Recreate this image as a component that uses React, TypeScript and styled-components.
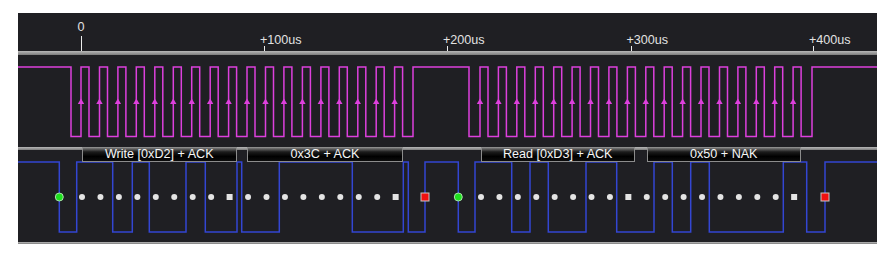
import React from "react";
import styled, { createGlobalStyle } from "styled-components";

const GlobalStyle = createGlobalStyle`
  html, body { margin: 0; padding: 0; background: #ffffff; }
  body { font-family: "Liberation Sans", Arial, sans-serif; }
`;

const OX = 18; // panel left in page coords
const W = 859;

const Scope = styled.div`
  padding: 13px 0 0 ${OX}px;
`;

const Panel = styled.div`
  width: ${W}px;
  background: #1f1f23;
  display: flex;
  flex-direction: column;
`;

const Ruler = styled.div`
  position: relative;
  height: 38px;
`;

const Tick = styled.div`
  position: absolute;
  top: 0;
  bottom: 0;
  width: 0;
`;

const TickLabel = styled.span<{ $major?: boolean }>`
  position: absolute;
  top: ${(p) => (p.$major ? 7 : 20)}px;
  left: ${(p) => (p.$major ? "0" : "-4px")};
  transform: ${(p) => (p.$major ? "translateX(-50%)" : "none")};
  font-size: 12.6px;
  line-height: 14px;
  color: #e2e2e2;
  white-space: nowrap;
`;

const TickLine = styled.div<{ $major?: boolean }>`
  position: absolute;
  left: 0;
  bottom: 0;
  width: 1px;
  height: ${(p) => (p.$major ? 15 : 5)}px;
  background: #ececec;
`;

const Bar = styled.div<{ $h: number }>`
  height: ${(p) => p.$h}px;
  background: linear-gradient(to bottom, #b8b8b8, #7c7c7c);
`;

const Channel = styled.div`
  position: relative;
  height: 92px;
  svg { display: block; }
`;

const DecodeBox = styled.div`
  position: absolute;
  top: -3px;
  height: 15px;
  box-sizing: border-box;
  border: 1px solid #8c8c8c;
  background: linear-gradient(to bottom, #777 0%, #1c1c1c 30%, #000 65%, #0c0c0c 100%);
  color: #f6f6f6;
  font-size: 12.6px;
  line-height: 13px;
  text-align: center;
  white-space: nowrap;
  overflow: hidden;
`;

const CLK = "#dd40dd";
const SDA = "#3346d2";

const STEP_W = 18.45;
const STEP_R = 18.42;
const writeRises = Array.from({ length: 18 }, (_, i) => 81 + i * STEP_W);
const readRises = Array.from({ length: 18 }, (_, i) => 480 + i * STEP_R);

function clockPath() {
  const hi = 67;
  const lo = 136.5;
  let d = `M18,${hi} H71 V${lo}`;
  for (const r of writeRises) d += ` H${r.toFixed(1)} V${hi} H${(r + 8).toFixed(1)} V${lo}`;
  d += ` H413 V${hi} H469 V${lo}`;
  for (const r of readRises) d += ` H${r.toFixed(1)} V${hi} H${(r + 8).toFixed(1)} V${lo}`;
  d += ` H812 V${hi} H877`;
  return d;
}

const sdaEdges = [
  59.3, 76.7, 112.7, 132.3, 149.3, 186, 205.3, 237, 241.7, 279.3, 352.3, 403.3,
  408.3, 425, 458.3, 475, 511.7, 530, 548.3, 586, 616.7, 654, 672.3, 690.7,
  709.3, 783.3, 806.7, 825,
];

function dataPath() {
  const hi = 162;
  const lo = 232;
  let d = `M18,${hi}`;
  let level = hi;
  for (const x of sdaEdges) {
    level = level === hi ? lo : hi;
    d += ` H${x} V${level}`;
  }
  d += ` H877`;
  return d;
}

const ticks = [
  { x: 81, label: "0", major: true },
  { x: 264, label: "+100us" },
  { x: 447, label: "+200us" },
  { x: 630.5, label: "+300us" },
  { x: 813, label: "+400us" },
];

const decodes = [
  { x0: 81.5, x1: 237, text: "Write [0xD2] + ACK" },
  { x0: 247, x1: 403, text: "0x3C + ACK" },
  { x0: 480.5, x1: 635, text: "Read [0xD3] + ACK" },
  { x0: 646.5, x1: 801, text: "0x50 + NAK" },
];

const DOT_Y = 197;

function Markers() {
  const all = [...writeRises, ...readRises];
  return (
    <g>
      {all.map((r, i) => {
        const x = r + 1;
        const isAck = i % 9 === 8;
        return isAck ? (
          <rect key={i} x={x - 3} y={DOT_Y - 3} width={6} height={6} fill="#e4e4e4" />
        ) : (
          <circle key={i} cx={x} cy={DOT_Y} r={3} fill="#e4e4e4" />
        );
      })}
      {[59.3, 458.3].map((x) => (
        <circle key={`s${x}`} cx={x} cy={DOT_Y} r={4} fill="#1ee01e" stroke="#b8e8b8" strokeWidth={0.9} />
      ))}
      {[425, 825].map((x) => (
        <rect
          key={`p${x}`}
          x={x - 4}
          y={DOT_Y - 4}
          width={8}
          height={8}
          fill="#f21010"
          stroke="#c8c8c8"
          strokeWidth={1}
        />
      ))}
    </g>
  );
}

export default function App() {
  return (
    <>
      <GlobalStyle />
      <Scope>
        <Panel>
          <Ruler>
            {ticks.map((t) => (
              <Tick key={t.label} style={{ left: t.x - OX }}>
                <TickLabel $major={t.major}>{t.label}</TickLabel>
                <TickLine $major={t.major} />
              </Tick>
            ))}
          </Ruler>
          <Bar $h={4} />
          <Channel>
            <svg width={W} height={92} viewBox={`${OX} 55 ${W} 92`}>
              <path d={clockPath()} fill="none" stroke={CLK} strokeWidth={1.5} />
              {[...writeRises, ...readRises].map((r, i) => (
                <polygon
                  key={i}
                  points={`${r - 3.2},104 ${r + 3.2},104 ${r},98.5`}
                  fill={CLK}
                />
              ))}
            </svg>
          </Channel>
          <Bar $h={3} />
          <Channel>
            <svg width={W} height={92} viewBox={`${OX} 150 ${W} 92`}>
              <path d={dataPath()} fill="none" stroke={SDA} strokeWidth={1.5} />
              <Markers />
            </svg>
            {decodes.map((d) => (
              <DecodeBox key={d.text} style={{ left: d.x0 - OX, width: d.x1 - d.x0 }}>
                {d.text}
              </DecodeBox>
            ))}
          </Channel>
          <Bar $h={2} />
        </Panel>
      </Scope>
    </>
  );
}
